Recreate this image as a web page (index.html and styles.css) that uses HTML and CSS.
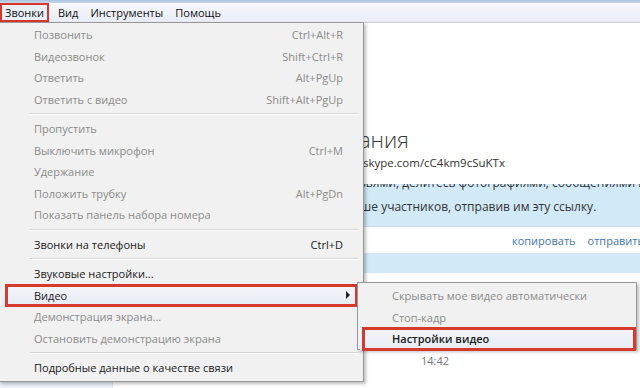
FILE: index.html
```html
<!DOCTYPE html>
<html lang="ru">
<head>
  <meta charset="UTF-8" />
  <title>Skype - Звонки</title>
  <link rel="stylesheet" href="styles.css">
</head>
<body>

<div class="window">
  <div class="titlebar"></div>

  <nav class="menubar">
    <span class="menubar-item is-open">Звонки</span>
    <span class="menubar-item">Вид</span>
    <span class="menubar-item">Инструменты</span>
    <span class="menubar-item">Помощь</span>
  </nav>

  <div class="workspace">
    <aside class="sidebar"></aside>

    <main class="chat">
      <h1 class="chat-title">Ссылка для собрания</h1>
      <div class="chat-link">https://join.skype.com/cC4km9cSuKTx</div>

      <div class="invite-band">
        <p>Общайтесь с друзьями, делитесь фотографиями, сообщениями и многим другим.</p>
        <p>Пригласите больше участников, отправив им эту ссылку.</p>
      </div>

      <div class="invite-actions">
        <a class="invite-link">копировать</a>
        <span class="invite-divider"></span>
        <a class="invite-link">отправить</a>
      </div>

      <div class="invite-band invite-band-empty"></div>

      <div class="chat-time">14:42</div>
    </main>
  </div>

  <!-- dropdown for "Звонки" -->
  <div class="dropdown">
    <div class="menu-item is-disabled"><span class="label">Позвонить</span><span class="keys">Ctrl+Alt+R</span></div>
    <div class="menu-item is-disabled"><span class="label">Видеозвонок</span><span class="keys">Shift+Ctrl+R</span></div>
    <div class="menu-item is-disabled"><span class="label">Ответить</span><span class="keys">Alt+PgUp</span></div>
    <div class="menu-item is-disabled"><span class="label">Ответить с видео</span><span class="keys">Shift+Alt+PgUp</span></div>
    <div class="menu-sep"></div>
    <div class="menu-item is-disabled"><span class="label">Пропустить</span></div>
    <div class="menu-item is-disabled"><span class="label">Выключить микрофон</span><span class="keys">Ctrl+M</span></div>
    <div class="menu-item is-disabled"><span class="label">Удержание</span></div>
    <div class="menu-item is-disabled"><span class="label">Положить трубку</span><span class="keys">Alt+PgDn</span></div>
    <div class="menu-item is-disabled"><span class="label">Показать панель набора номера</span></div>
    <div class="menu-sep"></div>
    <div class="menu-item"><span class="label">Звонки на телефоны</span><span class="keys">Ctrl+D</span></div>
    <div class="menu-sep"></div>
    <div class="menu-item"><span class="label">Звуковые настройки...</span></div>
    <div class="menu-item is-active is-marked"><span class="label">Видео</span><span class="arrow"></span></div>
    <div class="menu-item is-disabled"><span class="label">Демонстрация экрана...</span></div>
    <div class="menu-item is-disabled"><span class="label">Остановить демонстрацию экрана</span></div>
    <div class="menu-sep"></div>
    <div class="menu-item"><span class="label">Подробные данные о качестве связи</span></div>
  </div>

  <!-- submenu for "Видео" -->
  <div class="submenu">
    <div class="menu-item is-disabled"><span class="label">Скрывать мое видео автоматически</span></div>
    <div class="menu-item is-disabled"><span class="label">Стоп-кадр</span></div>
    <div class="menu-item is-active is-marked is-strong"><span class="label">Настройки видео</span></div>
  </div>
</div>

</body>
</html>
```

FILE: styles.css
```css
body {
  margin: 0;
  padding: 0;
  background: #fff;
  font-family: "Open Sans", "Noto Sans", sans-serif;
  font-size: 11px;
  color: #1a1a1a;
  overflow: hidden;
}

.window {
  position: relative;
  width: 640px;
  height: 388px;
  display: flex;
  flex-direction: column;
  overflow: hidden;
}

.titlebar {
  height: 3px;
  background: linear-gradient(#a9c3df, #c7d8ec);
}

/* menu bar */
.menubar {
  height: 19px;
  display: flex;
  align-items: center;
  background: linear-gradient(#f7f8fc, #e9ecf6);
  border-bottom: 1px solid #c9ccd6;
}

.menubar-item {
  padding: 0 6px 0 6px;
  line-height: 19px;
  color: #111;
}

.menubar-item.is-open {
  box-sizing: border-box;
  height: 19px;
  line-height: 15px;
  padding: 0 3px 0 3px;
  margin-right: 3px;
  border: 2px solid #d8362b;
  background: #eaf0f8;
}

/* page behind the menu */
.workspace {
  flex: 1;
  display: flex;
}

.sidebar {
  flex-shrink: 0;
  width: 112px;
  background: #eaf0f6;
  border-right: 1px solid #dde5ee;
}

.chat {
  flex: 1;
  min-width: 0;
  display: flex;
  flex-direction: column;
  padding-top: 102px;
}

.chat-title {
  margin: 0 0 0 76px;
  font-size: 22px;
  font-weight: 300;
  line-height: 28px;
  color: #3a3a3a;
  white-space: nowrap;
}

.chat-link {
  margin: 0 0 0 188px;
  font-size: 11.5px;
  line-height: 20px;
  color: #333;
  white-space: nowrap;
}

.invite-band {
  margin-top: 11px;
  height: 42px;
  overflow: hidden;
  background: #d2e9f8;
  border-bottom: 1px solid #c3dbeb;
  padding-left: 148px;
}

.invite-band p {
  margin: 0;
  font-size: 12px;
  line-height: 22px;
  color: #333;
  white-space: nowrap;
}

.invite-band p:first-child {
  margin-top: -12px;
  margin-bottom: 2px;
}

.invite-band-empty {
  margin-top: 0;
  height: 20px;
  border-bottom: none;
}

.invite-actions {
  height: 26px;
  display: flex;
  align-items: center;
  padding-left: 399px;
  gap: 6px;
}

.invite-link {
  color: #3f78ae;
  font-size: 11px;
  white-space: nowrap;
}

.invite-divider {
  width: 1px;
  height: 13px;
  background: #c8d4de;
}

.chat-time {
  margin: 80px 0 0 308px;
  font-size: 11px;
  color: #777;
}

/* dropdown menus */
.dropdown,
.submenu {
  position: absolute;
  box-sizing: border-box;
  padding: 2px 2px 3px;
  background: #f1f1f1;
  border: 1px solid #979797;
  box-shadow: 2px 2px 3px rgba(0, 0, 0, 0.25);
}

.dropdown {
  top: 22px;
  left: -1px;
  width: 365px;
  height: 360px;
  padding-top: 1px;
}

.submenu {
  top: 282px;
  left: 357px;
  width: 280px;
  height: 68px;
}

.menu-item {
  position: relative;
  display: flex;
  align-items: center;
  height: 21.5px;
  padding: 0 18px 0 32px;
  color: #1a1a1a;
  white-space: nowrap;
}

.submenu .menu-item {
  padding-left: 32px;
}

.menu-item .label {
  flex: 1;
}

.menu-item .keys {
  text-align: right;
}

.menu-item.is-disabled {
  color: #8b8b8b;
}

.menu-item.is-strong {
  font-weight: 600;
}

.menu-item.is-active {
  background: linear-gradient(#f4f6fa, #e6ebf3);
}

.menu-item.is-marked::after {
  content: "";
  position: absolute;
  left: 3px;
  right: 3px;
  top: -1px;
  bottom: -1px;
  border: 3px solid #d6392d;
}

.submenu .menu-item.is-marked::after {
  left: 2px;
  right: -2px;
}

.arrow {
  width: 0;
  height: 0;
  border-top: 4px solid transparent;
  border-bottom: 4px solid transparent;
  border-left: 4px solid #222;
  margin-right: -7px;
}

.menu-sep {
  height: 1px;
  margin: 3px 2px 3px 28px;
  background: #d7d7d7;
  border-bottom: 1px solid #fff;
}
```
